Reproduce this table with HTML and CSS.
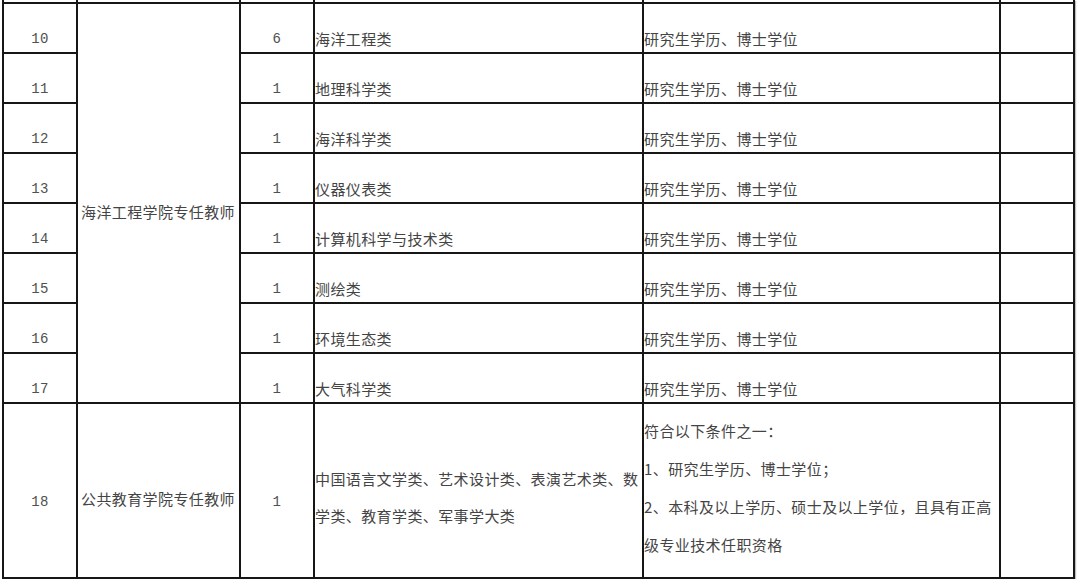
FILE: index.html
```html
<!DOCTYPE html>
<html lang="zh-CN">
<head>
<meta charset="utf-8">
<title>招聘岗位表</title>
<link rel="stylesheet" href="styles.css">
</head>
<body>
<table class="grid">
  <colgroup>
    <col class="c-no">
    <col class="c-post">
    <col class="c-num">
    <col class="c-major">
    <col class="c-req">
    <col class="c-note">
  </colgroup>
  <tbody>
    <tr class="stub"><td></td><td></td><td></td><td></td><td></td><td></td></tr>
    <tr class="row">
      <td class="num">10</td>
      <td class="post" rowspan="8">海洋工程学院专任教师</td>
      <td class="num">6</td>
      <td class="txt">海洋工程类</td>
      <td class="txt">研究生学历、博士学位</td>
      <td></td>
    </tr>
    <tr class="row"><td class="num">11</td><td class="num">1</td><td class="txt">地理科学类</td><td class="txt">研究生学历、博士学位</td><td></td></tr>
    <tr class="row"><td class="num">12</td><td class="num">1</td><td class="txt">海洋科学类</td><td class="txt">研究生学历、博士学位</td><td></td></tr>
    <tr class="row"><td class="num">13</td><td class="num">1</td><td class="txt">仪器仪表类</td><td class="txt">研究生学历、博士学位</td><td></td></tr>
    <tr class="row"><td class="num">14</td><td class="num">1</td><td class="txt">计算机科学与技术类</td><td class="txt">研究生学历、博士学位</td><td></td></tr>
    <tr class="row"><td class="num">15</td><td class="num">1</td><td class="txt">测绘类</td><td class="txt">研究生学历、博士学位</td><td></td></tr>
    <tr class="row"><td class="num">16</td><td class="num">1</td><td class="txt">环境生态类</td><td class="txt">研究生学历、博士学位</td><td></td></tr>
    <tr class="row"><td class="num">17</td><td class="num">1</td><td class="txt">大气科学类</td><td class="txt">研究生学历、博士学位</td><td></td></tr>
    <tr class="big">
      <td class="num mid">18</td>
      <td class="post2">公共教育学院专任教师</td>
      <td class="num mid">1</td>
      <td class="major2">中国语言文学类、艺术设计类、表演艺术类、数学类、教育学类、军事学大类</td>
      <td class="req2">
        <p>符合以下条件之一：</p>
        <p>1、研究生学历、博士学位；</p>
        <p>2、本科及以上学历、硕士及以上学位，且具有正高级专业技术任职资格</p>
      </td>
      <td></td>
    </tr>
  </tbody>
</table>
</body>
</html>
```

FILE: styles.css
```css
html, body {
  margin: 0;
  padding: 0;
  background: #ffffff;
}

body {
  font-family: "Noto Sans CJK SC", "Noto Sans", sans-serif;
  color: #444444;
  font-size: 15px;
}

.grid {
  border-collapse: collapse;
  table-layout: fixed;
  width: 1071px;
  margin-left: 2px;
  box-shadow: 1px 1px 1px rgba(0, 0, 0, 0.25);
}

.c-no { width: 74px; }
.c-post { width: 163px; }
.c-num { width: 74px; }
.c-major { width: 329px; }
.c-req { width: 357px; }
.c-note { width: 74px; }

.grid td {
  border: 2px solid #161616;
  padding: 0;
  letter-spacing: 0.4px;
  line-height: 20px;
  word-break: break-all;
  box-sizing: border-box;
}

.stub td {
  border-top: 0;
  height: 3px;
}

.row td {
  height: 50px;
  vertical-align: bottom;
  padding-bottom: 3px;
}

.row td.post {
  vertical-align: middle;
  padding: 18px 0 0 3px;
}

.num {
  text-align: center;
  font-family: "Liberation Mono", "DejaVu Sans Mono", monospace;
  font-size: 14px;
  letter-spacing: 0;
  color: #505050;
}

.big td {
  height: 175px;
  vertical-align: middle;
}

.big td.mid {
  padding-top: 22px;
}

.big td.post2 {
  padding: 17px 0 0 3px;
}

.big td.major2 {
  line-height: 37px;
  padding-top: 12px;
}

.big td.req2 {
  line-height: 38px;
  padding-bottom: 5px;
}

.req2 p {
  margin: 0;
}
```
